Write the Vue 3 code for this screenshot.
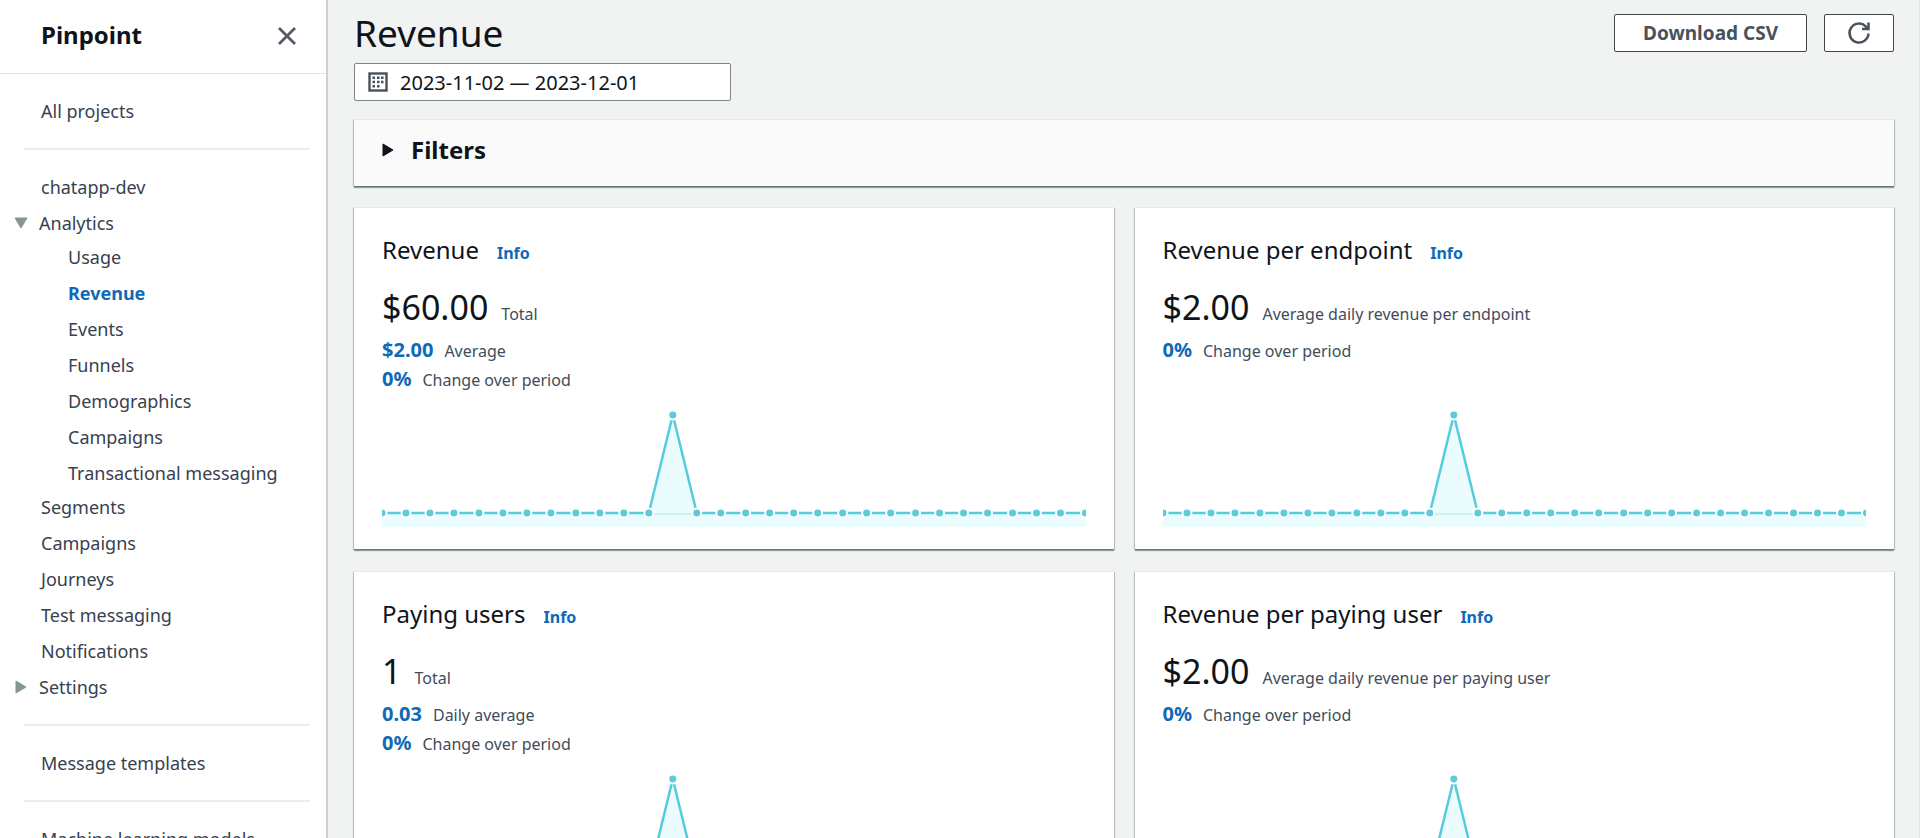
<script setup>
import { ref } from 'vue'

const analytics = ['Usage', 'Revenue', 'Events', 'Funnels', 'Demographics', 'Campaigns', 'Transactional messaging']
const sections = ['Segments', 'Campaigns', 'Journeys', 'Test messaging', 'Notifications']
const active = 'Revenue'
const range = ref('2023-11-02 — 2023-12-01')

const cards = [
  {
    title: 'Revenue', value: '$60.00', label: 'Total',
    stats: [{ value: '$2.00', label: 'Average' }, { value: '0%', label: 'Change over period' }]
  },
  {
    title: 'Revenue per endpoint', value: '$2.00', label: 'Average daily revenue per endpoint',
    stats: [{ value: '0%', label: 'Change over period' }]
  },
  {
    title: 'Paying users', value: '1', label: 'Total',
    stats: [{ value: '0.03', label: 'Daily average' }, { value: '0%', label: 'Change over period' }]
  },
  {
    title: 'Revenue per paying user', value: '$2.00', label: 'Average daily revenue per paying user',
    stats: [{ value: '0%', label: 'Change over period' }]
  }
]

// Daily series: 30 days with a single spike on day 13
const W = 704
const BASE = 105
const TOP = 7
const FLOOR = 119
const points = Array.from({ length: 30 }, (_, i) => ({
  x: Math.floor((i * W) / 29),
  y: i === 12 ? TOP : BASE
}))
const line = points.map(p => `${p.x},${p.y}`).join(' ')
const area = `0,${FLOOR} ${line} ${W},${FLOOR}`
</script>

<template>
  <div class="app">
    <nav class="sidebar" aria-label="Pinpoint">
      <header class="side-head">
        <h2>Pinpoint</h2>
        <button class="close" type="button" aria-label="Close navigation">
          <svg width="20" height="20" viewBox="0 0 20 20"><path d="M2 2 18 18M18 2 2 18" /></svg>
        </button>
      </header>
      <div class="side-body">
        <ul>
          <li><a href="#">All projects</a></li>
        </ul>
        <hr />
        <ul>
          <li><a href="#">chatapp-dev</a></li>
          <li class="group">
            <button type="button" aria-label="Collapse Analytics" aria-expanded="true">
              <svg width="14" height="14" viewBox="0 0 14 14"><path d="M1 2h12L7 12z" /></svg>
            </button>
            <a href="#">Analytics</a>
          </li>
          <li>
            <ul class="sub">
              <li v-for="item in analytics" :key="item">
                <a href="#" :class="{ active: item === active }">{{ item }}</a>
              </li>
            </ul>
          </li>
          <li v-for="item in sections" :key="item"><a href="#">{{ item }}</a></li>
          <li class="group">
            <button type="button" aria-label="Expand Settings" aria-expanded="false">
              <svg width="14" height="14" viewBox="0 0 14 14"><path d="M2 1v12L12 7z" /></svg>
            </button>
            <a href="#">Settings</a>
          </li>
        </ul>
        <hr />
        <ul>
          <li><a href="#">Message templates</a></li>
        </ul>
        <hr />
        <ul>
          <li><a href="#">Machine learning models</a></li>
        </ul>
      </div>
    </nav>

    <main>
      <div class="top">
        <h1>Revenue</h1>
        <div class="actions">
          <button class="btn" type="button">Download CSV</button>
          <button class="btn refresh" type="button" aria-label="Refresh">
            <svg width="24" height="24" viewBox="0 0 24 24">
              <path d="M21.5 12.5a9.5 9.5 0 1 1-2.8-7.2L21.5 8" />
              <path d="M21.5 1.5V8H15" />
            </svg>
          </button>
        </div>
      </div>

      <div class="date">
        <svg width="20" height="20" viewBox="0 0 20 20" aria-hidden="true">
          <rect class="frame" x="1.5" y="1.5" width="17" height="17" />
          <path
            class="cells"
            d="M4.5 4.5h2.5v2.5h-2.5zM9 4.5h2.5v2.5H9zM13 4.5h2.5v2.5H13zM4.5 8.7h2.5v2.5h-2.5zM9 8.7h2.5v2.5H9zM13 8.7h2.5v2.5H13zM4.5 13h2.5v2.5h-2.5zM9 13h2.5v2.5H9z"
          />
        </svg>
        <input v-model="range" type="text" aria-label="Date range" readonly />
      </div>

      <section class="panel filters">
        <button type="button" aria-expanded="false">
          <svg width="14" height="14" viewBox="0 0 14 14"><path d="M2 1v12L12 7z" /></svg>
          Filters
        </button>
      </section>

      <div class="grid">
        <article v-for="card in cards" :key="card.title" class="panel card">
          <header>
            <h3>{{ card.title }}</h3>
            <a href="#">Info</a>
          </header>
          <p class="total"><span class="big">{{ card.value }}</span> <span>{{ card.label }}</span></p>
          <div class="stats">
            <p v-for="stat in card.stats" :key="stat.label"><strong>{{ stat.value }}</strong> <span>{{ stat.label }}</span></p>
          </div>
          <svg class="chart" :viewBox="`0 0 ${W} ${FLOOR}`" role="img" :aria-label="`${card.title} by day`">
            <polygon class="area" :points="area" />
            <line class="zero" :x1="points[11].x" :y1="BASE + 1" :x2="points[13].x" :y2="BASE + 1" />
            <polyline class="line" :points="line" />
            <circle v-for="p in points" :key="p.x" :cx="p.x" :cy="p.y" r="4.5" />
          </svg>
        </article>
      </div>
    </main>
  </div>
</template>

<style>
body {
  margin: 0;
}
</style>

<style scoped>
.app {
  display: flex;
  height: 100vh;
  overflow: hidden;
  background: #f1f3f3;
  color: #0f141a;
  font-family: "Noto Sans", "Open Sans", sans-serif;
  font-size: 18px;
}
h1, h2, h3, p, ul {
  margin: 0;
  padding: 0;
}
ul {
  list-style: none;
}
a {
  color: inherit;
  text-decoration: none;
}
button {
  border: 0;
  padding: 0;
  background: none;
  color: inherit;
  font: inherit;
  cursor: pointer;
}
svg {
  display: block;
}

.sidebar {
  box-sizing: border-box;
  flex: 0 0 328px;
  border-right: 2px solid #cdd1d1;
  background: #fff;
  color: #37414f;
  overflow: hidden;
}
.side-head {
  box-sizing: border-box;
  display: flex;
  align-items: flex-start;
  justify-content: space-between;
  height: 74px;
  padding: 19px 29px 0 41px;
  border-bottom: 1px solid #e3e6e6;
}
.side-head h2 {
  color: #0f141a;
  font-size: 24px;
  line-height: 32px;
}
.close {
  padding: 7px 0;
}
.close svg {
  fill: none;
  stroke: #545b64;
  stroke-width: 2.8;
}
.side-body {
  padding: 19px 16px 19px 24px;
}
.side-body li > a {
  display: block;
  padding-left: 17px;
  line-height: 36px;
}
.side-body hr {
  height: 2px;
  margin: 19px 0;
  border: 0;
  background: #eaeded;
}
.side-body .group {
  display: flex;
  align-items: center;
  margin-left: -10px;
}
.side-body .group svg {
  fill: #879596;
  stroke: #879596;
  stroke-width: 1;
  stroke-linejoin: round;
}
.side-body .group a {
  padding-left: 11px;
}
.side-body .sub {
  margin: -2px 0;
  padding-left: 27px;
}
.active {
  color: #0f69b8;
  font-weight: 700;
}

main {
  flex: 1;
  min-width: 0;
  padding: 14px 25px 24px 26px;
  border-right: 1px solid #e3e6e6;
  overflow: hidden;
}
.top {
  display: flex;
  align-items: flex-start;
  justify-content: space-between;
}
h1 {
  font-size: 37px;
  font-weight: 400;
  line-height: 38px;
}
.actions {
  display: flex;
  gap: 17px;
}
.btn {
  height: 38px;
  padding: 0 28px;
  border: 1px solid #414750;
  border-radius: 2px;
  background: #fff;
  color: #49525c;
  font-size: 19px;
  font-weight: 700;
}
.refresh {
  padding: 0 22px;
}
.refresh svg {
  fill: none;
  stroke: #49525c;
  stroke-width: 2.5;
}
.date {
  display: flex;
  box-sizing: border-box;
  align-items: center;
  gap: 12px;
  width: 377px;
  height: 38px;
  margin-top: 11px;
  padding: 0 13px;
  border: 1px solid #7d838a;
  border-radius: 2px;
  background: #fff;
}
.date .frame {
  fill: none;
  stroke: #49525c;
  stroke-width: 2.4;
}
.date .cells {
  fill: #49525c;
}
.date input {
  flex: 1;
  min-width: 0;
  border: 0;
  padding: 0;
  outline: 0;
  background: none;
  color: #0f141a;
  font: inherit;
  font-size: 20px;
}

.panel {
  border-top: 1px solid #e6e9e9;
  background: #fff;
  box-shadow: 0 2px 1px rgba(0, 28, 36, 0.35), 1px 1px 1px rgba(0, 28, 36, 0.2), -1px 1px 1px rgba(0, 28, 36, 0.2);
}
.filters {
  margin-top: 18px;
  padding: 14px 27px 20px;
  background: #fafafa;
}
.filters button {
  display: flex;
  align-items: center;
  gap: 16px;
  font-size: 24px;
  font-weight: 700;
  line-height: 32px;
}
.filters svg {
  fill: #0f141a;
  stroke: #0f141a;
  stroke-width: 1;
  stroke-linejoin: round;
}

.grid {
  display: grid;
  grid-template-columns: 1fr 1fr;
  gap: 22px 21px;
  margin-top: 21px;
}
.card {
  padding: 26px 28px 22px;
}
.card header {
  display: flex;
  align-items: baseline;
  gap: 18px;
  line-height: 32px;
}
.card h3 {
  font-size: 24px;
  font-weight: 400;
}
.card header a {
  color: #0f69b8;
  font-size: 16px;
  font-weight: 700;
}
.card p {
  display: flex;
  align-items: baseline;
  gap: 11px;
  color: #414d5c;
  font-size: 16px;
  line-height: 27px;
}
.card .total {
  gap: 13px;
  margin-top: 16px;
  line-height: 44px;
}
.big {
  color: #0f141a;
  font-size: 34px;
}
.stats {
  min-height: 72px;
}
.stats strong {
  color: #0f69b8;
  font-size: 20px;
}
.chart {
  width: 100%;
  height: auto;
}
.area {
  fill: #ebfcfe;
}
.line {
  fill: none;
  stroke: #56cbdc;
  stroke-width: 2.5;
}
.zero {
  stroke: #b0e9ec;
  stroke-width: 1;
}
.chart circle {
  fill: #5ecbdb;
  stroke: #fff;
  stroke-width: 2;
}
</style>
